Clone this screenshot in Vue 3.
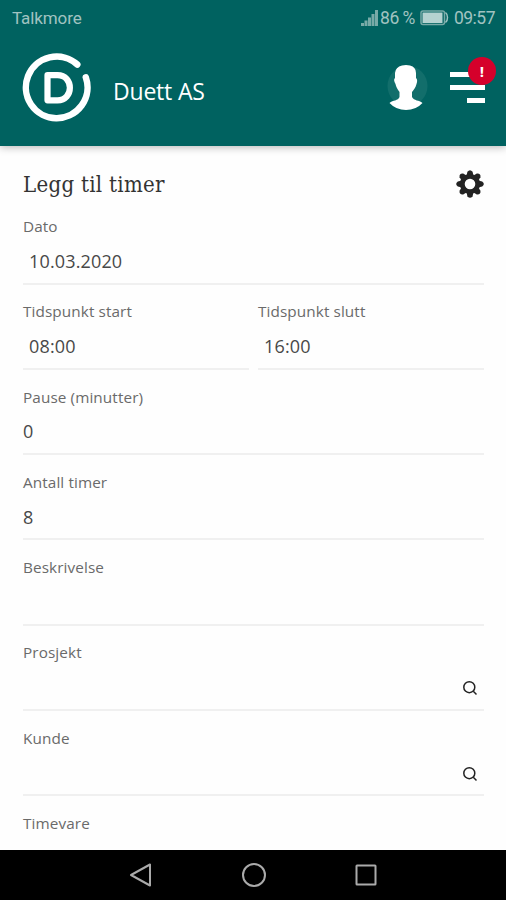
<script setup>
import { ref } from 'vue';

const date = ref('10.03.2020');
const start = ref('08:00');
const end = ref('16:00');

const fields = ref([
    { id: 'pause', label: 'Pause (minutter)', value: '0' },
    { id: 'antall', label: 'Antall timer', value: '8' },
    { id: 'beskrivelse', label: 'Beskrivelse', value: '' },
    { id: 'prosjekt', label: 'Prosjekt', value: '', search: true },
    { id: 'kunde', label: 'Kunde', value: '', search: true },
    { id: 'timevare', label: 'Timevare', value: '' },
]);

const teeth = [0, 45, 90, 135, 180, 225, 270, 315];
</script>

<template>
    <div class="screen">
        <header class="app-header">
            <div class="status-bar">
                <span class="carrier">Talkmore</span>
                <div class="status-right">
                    <svg class="signal" width="18" height="16" viewBox="0 0 18 16">
                        <path d="M0 13h3v3H0zM3.500 10.500h3V16h-3zM7 7.500h3V16H7zM10.500 4h3v12h-3zM14 0h3v16h-3z" />
                    </svg>
                    <span class="percent">86 %</span>
                    <svg class="battery" width="29" height="16" viewBox="0 0 29 16">
                        <rect x="1" y="1" width="23.500" height="13.500" rx="2" fill="none" stroke="#78aaa7" stroke-width="1.500" />
                        <rect x="2.500" y="2.500" width="20" height="10.500" fill="#b5d2d0" />
                        <path d="M25.500 2.500q2 1.500 2 5t-2 5" fill="none" stroke="#a0c3c1" stroke-width="1.500" />
                    </svg>
                    <span class="clock">09:57</span>
                </div>
            </div>

            <div class="title-bar">
                <svg class="logo" width="70" height="70" viewBox="0 0 70 70">
                    <path d="M63.800 24.300A30.800 30.800 0 1 1 55.300 11.500" />
                    <path class="letter" d="M25.500 22.200H35.500C52 22.200 52 47.300 35.500 47.300H25.500Z" />
                </svg>
                <span class="company">Duett AS</span>
                <svg class="avatar" width="42" height="48" viewBox="0 0 42 48">
                    <circle cx="21.500" cy="23" r="20" fill="#126e6b" />
                    <path
                        d="M16 2.500Q20 1.500 24 2.500Q30 4 30 10V15Q32 16.500 30.500 21C29.500 25 27.500 27 26 29V34C28 38 33 37 36.500 40Q30 47 20 47Q10 47 3.500 40C7 37 12 38 13.500 34V29C11.500 26 10 24 9.500 21Q7 16.500 9 15V10Q9.500 4 16 2.500Z"
                        fill="#fff"
                    />
                </svg>
                <button class="menu" aria-label="Meny">
                    <span class="bar"></span>
                    <span class="bar"></span>
                    <span class="bar short"></span>
                    <span class="badge">!</span>
                </button>
            </div>
        </header>

        <main class="content">
            <div class="heading">
                <h1>Legg til timer</h1>
                <svg class="gear" width="28" height="28" viewBox="-14 -14 28 28">
                    <path
                        v-for="angle in teeth"
                        :key="angle"
                        d="M-3.500-8L-2.600-12.200Q0-15.400 2.600-12.200L3.500-8Z"
                        :transform="`rotate(${angle})`"
                        fill="#222"
                    />
                    <circle r="7.700" fill="none" stroke="#222" stroke-width="4.800" />
                </svg>
            </div>

            <label class="field">
                <span class="label">Dato</span>
                <input class="indented" v-model="date" />
            </label>

            <div class="times">
                <label class="field">
                    <span class="label">Tidspunkt start</span>
                    <input class="indented" v-model="start" />
                </label>
                <label class="field">
                    <span class="label">Tidspunkt slutt</span>
                    <input class="indented" v-model="end" />
                </label>
            </div>

            <label v-for="field in fields" :key="field.id" class="field">
                <span class="label">{{ field.label }}</span>
                <span class="control">
                    <input v-model="field.value" />
                    <svg v-if="field.search" class="search" width="16" height="16" viewBox="0 0 16 16">
                        <circle cx="7.300" cy="7.200" r="5.500" />
                        <path d="M11.300 11.300L14.500 14.500" />
                    </svg>
                </span>
            </label>
        </main>

        <nav class="nav-bar">
            <svg width="26" height="26" viewBox="0 0 26 26"><path d="M22 2.500V23.500L3 13Z" /></svg>
            <svg width="26" height="26" viewBox="0 0 26 26"><circle cx="13" cy="13" r="11" /></svg>
            <svg width="26" height="26" viewBox="0 0 26 26"><rect x="3.500" y="3.500" width="19" height="19" rx="0.500" /></svg>
        </nav>
    </div>
</template>

<style>
body {
    margin: 0;
}
</style>

<style scoped>
.screen {
    width: 506px;
    height: 900px;
    display: flex;
    flex-direction: column;
    overflow: hidden;
    background: #fefefe;
    font-family: "Open Sans", sans-serif;
}

.app-header {
    height: 146px;
    flex-shrink: 0;
    background: #006260;
    color: #fff;
    box-shadow: 0 1px 8px rgba(0, 0, 0, 0.3);
}

.status-bar {
    display: flex;
    justify-content: space-between;
    align-items: center;
    height: 36px;
    padding: 0 11px 0 12px;
    color: #a0c3c1;
    font-family: Roboto, sans-serif;
    font-size: 17.5px;
}

.carrier {
    font-size: 17px;
    letter-spacing: -0.1px;
}

.status-right {
    display: flex;
    align-items: center;
    letter-spacing: -0.5px;
}

.signal {
    fill: #78aaa7;
    margin-right: 1px;
}

.battery {
    margin: 0 5px 0 5px;
}

.title-bar {
    display: flex;
    align-items: center;
    height: 103px;
    padding: 0 21px 0 22px;
}

.logo {
    fill: none;
    stroke: #fff;
    stroke-width: 6.5;
    stroke-linecap: round;
}

.logo .letter {
    stroke-linejoin: round;
    stroke-width: 6.2;
}

.company {
    flex: 1;
    margin: 6px 0 0 21px;
    font-size: 23px;
    letter-spacing: -0.2px;
}

.avatar {
    margin: 0 22px 1px 0;
}

.menu {
    position: relative;
    display: flex;
    flex-direction: column;
    align-items: flex-end;
    gap: 8px;
    width: 35px;
    padding: 0;
    border: none;
    background: none;
}

.bar {
    width: 35px;
    height: 5.3px;
    background: #fff;
}

.bar.short {
    width: 18px;
}

.badge {
    position: absolute;
    top: -15px;
    right: -11px;
    width: 28px;
    height: 28px;
    border-radius: 50%;
    background: #d5002b;
    color: #fff;
    font: bold 15px/29px "Open Sans", sans-serif;
    text-align: center;
}

.content {
    flex: 1;
    min-height: 0;
    overflow: hidden;
    padding: 0 22px 0 23px;
}

.heading {
    display: flex;
    justify-content: space-between;
    align-items: center;
    height: 68px;
    padding-top: 8px;
    box-sizing: border-box;
}

h1 {
    margin: 0;
    font-family: "DejaVu Serif Condensed", "DejaVu Serif", serif;
    font-stretch: condensed;
    font-size: 22px;
    letter-spacing: 0.3px;
    font-weight: 400;
    color: #333;
}

.field {
    display: block;
    height: 85.3px;
}

.label {
    display: block;
    height: 25px;
    line-height: 25px;
    font-size: 15.3px;
    letter-spacing: 0.1px;
    color: #6a6a6a;
}

.control {
    position: relative;
    display: block;
}

input {
    display: block;
    width: 100%;
    height: 45.5px;
    padding: 0;
    box-sizing: border-box;
    border: none;
    border-bottom: 2px solid #f0f0f0;
    outline: none;
    background: none;
    font: 400 18px "Open Sans", sans-serif;
    letter-spacing: 0.15px;
    color: #484848;
}

.indented {
    padding-left: 6px;
}

.times {
    display: flex;
    gap: 9px;
}

.times .field {
    flex: 1;
}

.search {
    position: absolute;
    right: 6px;
    top: 15px;
    fill: none;
    stroke: #222;
    stroke-width: 1.5;
}

.nav-bar {
    display: flex;
    justify-content: center;
    align-items: center;
    gap: 86.5px;
    height: 50px;
    flex-shrink: 0;
    padding-left: 1px;
    background: #000;
    fill: none;
    stroke: #aaa;
    stroke-width: 2;
    stroke-linejoin: round;
}
</style>
